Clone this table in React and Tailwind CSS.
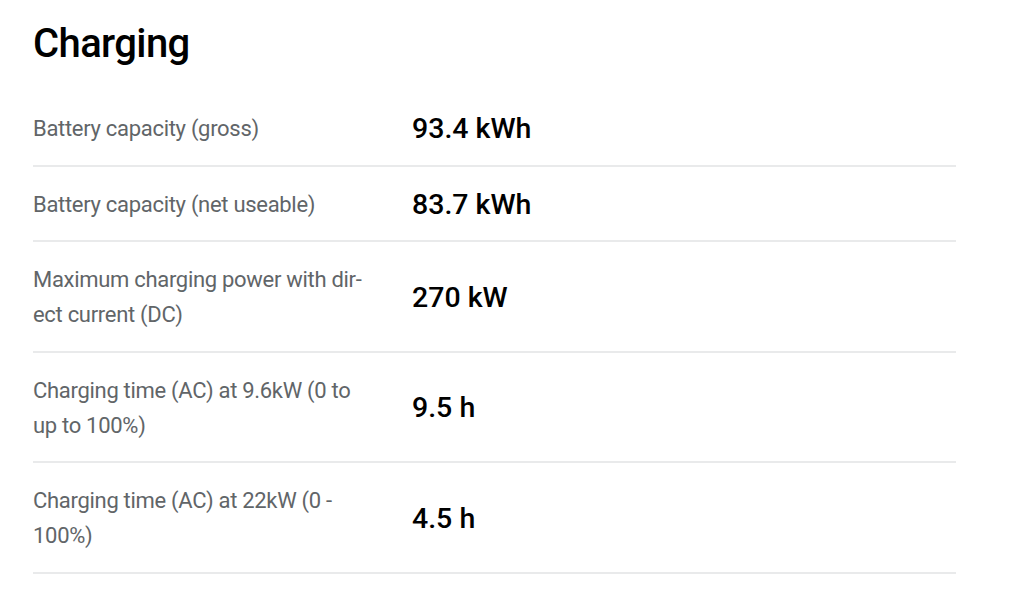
import React from "react";

const specs = [
  { label: "Battery capacity (gross)", value: "93.4 kWh" },
  { label: "Battery capacity (net useable)", value: "83.7 kWh" },
  { label: "Maximum charging power with dir\u00ADect current (DC)", value: "270 kW" },
  { label: "Charging time (AC) at 9.6kW (0 to up to 100%)", value: "9.5 h" },
  { label: "Charging time (AC) at 22kW (0 - 100%)", value: "4.5 h" },
];

export default function App() {
  return (
    <div className="min-h-screen bg-white pl-[33px] pt-[16px]" style={{ fontFamily: "Roboto, 'Liberation Sans', sans-serif" }}>
      <h2 className="text-[40px] leading-[56px] font-medium text-black tracking-[-0.6px]">Charging</h2>
      <div className="mt-[19px] w-[923px]">
        {specs.map((s) => (
          <div key={s.value} className="flex items-center border-b-2 border-[#e9eaeb] pt-[20px] pb-[18.5px]">
            <div className="w-[340px] mr-[39px] text-[22px] leading-[35px] tracking-[-0.3px] text-[#616568]">{s.label}</div>
            <div className="text-[28.5px] leading-[35px] font-medium text-black">{s.value}</div>
          </div>
        ))}
      </div>
    </div>
  );
}
